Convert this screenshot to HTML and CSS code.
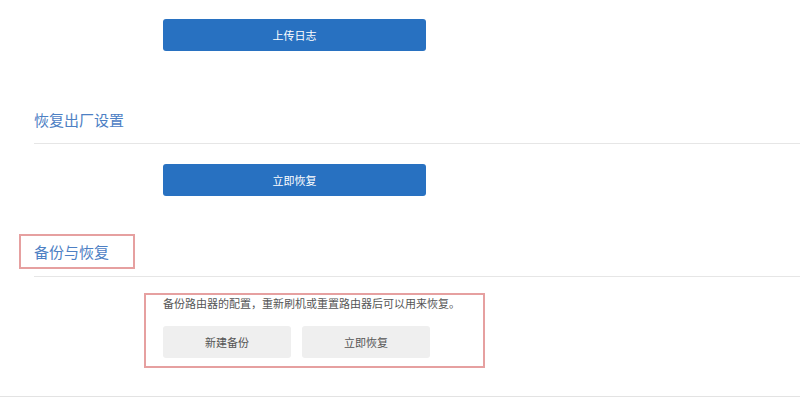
FILE: index.html
```html
<!DOCTYPE html>
<html lang="zh-CN">
  <head>
    <meta charset="UTF-8" />
    <meta name="viewport" content="width=device-width, initial-scale=1.0" />
    <title>系统设置</title>
    <link rel="stylesheet" href="styles.css">
  </head>
  <body>
    <div class="page">
      <div class="action first">
        <button class="btn-primary">上传日志</button>
      </div>

      <h2 class="section-title">恢复出厂设置</h2>
      <div class="action">
        <button class="btn-primary">立即恢复</button>
      </div>

      <h2 class="section-title second"><span class="mark">备份与恢复</span></h2>
      <div class="backup">
        <p class="hint">备份路由器的配置，重新刷机或重置路由器后可以用来恢复。</p>
        <div class="btn-row">
          <button class="btn-gray">新建备份</button>
          <button class="btn-gray">立即恢复</button>
        </div>
      </div>

      <div class="footer-line"></div>
    </div>
  </body>
</html>
```

FILE: styles.css
```css
body {
  margin: 0;
  background-color: #ffffff;
  font-family: "Noto Sans CJK SC", "Noto Sans", sans-serif;
}
.page {
  width: 800px;
  height: 397px;
  overflow: hidden;
}
.action {
  padding-left: 163px;
  margin-top: 20px;
}
.action.first {
  margin-top: 19px;
}
.btn-primary {
  display: block;
  width: 263px;
  height: 32px;
  border: none;
  border-radius: 3px;
  background-color: #2871c1;
  color: #ffffff;
  font-family: inherit;
  font-size: 11px;
  cursor: pointer;
}
.section-title {
  margin: 59px 0 0 34px;
  padding-bottom: 13px;
  border-bottom: 1px solid #e6e6e6;
  font-size: 15px;
  line-height: 20px;
  font-weight: normal;
  color: #4d80c4;
}
.section-title.second {
  margin-top: 46px;
  padding-bottom: 14px;
}
.mark {
  position: relative;
  display: inline-block;
}
.mark::after {
  content: "";
  position: absolute;
  left: -15px;
  right: -26px;
  top: -8px;
  bottom: -7px;
  border: 2px solid #e6a0a0;
}
.backup {
  box-sizing: border-box;
  width: 341px;
  margin: 16px 0 0 144px;
  padding: 0 0 8px 17px;
  border: 2px solid #e6a0a0;
}
.hint {
  margin: 0;
  font-size: 11px;
  line-height: 16px;
  color: #555555;
}
.btn-row {
  display: flex;
  gap: 11px;
  margin-top: 15px;
}
.btn-gray {
  width: 128px;
  height: 32px;
  border: none;
  border-radius: 3px;
  background-color: #efefef;
  color: #555555;
  font-family: inherit;
  font-size: 11px;
  cursor: pointer;
}
.footer-line {
  margin-top: 28px;
  border-top: 2px solid #e3e3e3;
}
```
